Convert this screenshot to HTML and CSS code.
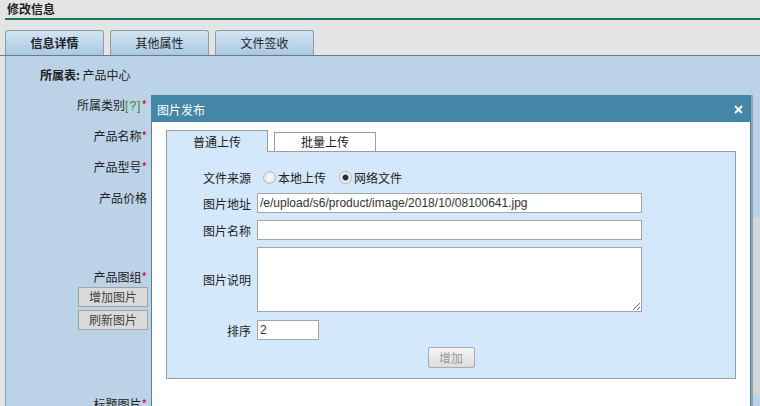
FILE: index.html
```html
<!DOCTYPE html>
<html lang="zh-CN">
<head>
    <meta charset="UTF-8">
    <title>修改信息</title>
    <link rel="stylesheet" href="styles.css">
</head>
<body>
    <div class="page-title">修改信息</div>

    <ul class="tabs">
        <li class="tab active">信息详情</li>
        <li class="tab">其他属性</li>
        <li class="tab">文件签收</li>
    </ul>

    <div class="panel">
        <div class="owner"><b>所属表:</b> 产品中心</div>
        <div class="form-list">
            <div class="form-row">
                <div class="row-label">所属类别<span class="help">[?]</span><em>*</em></div>
                <div class="row-value"></div>
            </div>
            <div class="form-row">
                <div class="row-label">产品名称<em>*</em></div>
                <div class="row-value"></div>
            </div>
            <div class="form-row">
                <div class="row-label">产品型号<em>*</em></div>
                <div class="row-value"></div>
            </div>
            <div class="form-row">
                <div class="row-label">产品价格</div>
                <div class="row-value"></div>
            </div>
            <div class="form-row gallery-row">
                <div class="row-label">
                    <div class="label-text">产品图组<em>*</em></div>
                    <button class="side-btn">增加图片</button>
                    <button class="side-btn">刷新图片</button>
                </div>
                <div class="gallery-box"></div>
            </div>
            <div class="form-row title-row">
                <div class="row-label">标题图片<em>*</em></div>
                <div class="row-value"></div>
            </div>
        </div>
    </div>

    <!-- 图片发布 dialog -->
    <div class="dialog">
        <div class="dialog-head">
            <span>图片发布</span>
            <svg class="dialog-close" width="9" height="9" viewBox="0 0 9 9">
                <path d="M1 1 L8 8 M8 1 L1 8" stroke="#fff" stroke-width="2" fill="none"/>
            </svg>
        </div>
        <div class="dialog-body">
            <div class="inner-tabs">
                <div class="inner-tab current">普通上传</div>
                <div class="inner-tab">批量上传</div>
            </div>
            <div class="upload-box">
                <div class="up-row">
                    <div class="up-label">文件来源</div>
                    <input type="radio" name="src" class="radio" id="src-local">
                    <label for="src-local">本地上传</label>
                    <input type="radio" name="src" class="radio second" id="src-net" checked>
                    <label for="src-net">网络文件</label>
                </div>
                <div class="up-row">
                    <div class="up-label">图片地址</div>
                    <input type="text" class="text-input" value="/e/upload/s6/product/image/2018/10/08100641.jpg">
                </div>
                <div class="up-row">
                    <div class="up-label">图片名称</div>
                    <input type="text" class="text-input">
                </div>
                <div class="up-row">
                    <div class="up-label">图片说明</div>
                    <textarea class="text-area"></textarea>
                </div>
                <div class="up-row">
                    <div class="up-label">排序</div>
                    <input type="text" class="text-input short" value="2">
                </div>
                <div class="up-actions">
                    <button class="add-btn" disabled>增加</button>
                </div>
            </div>
        </div>
    </div>
</body>
</html>
```

FILE: styles.css
```css
body {
    margin: 0;
    background: #e4e4e4;
    font: 12px "Noto Sans CJK SC", "Liberation Sans", sans-serif;
    color: #222;
}

/* Page header */
.page-title {
    margin-left: 5px;
    padding-left: 2px;
    height: 18px;
    line-height: 18px;
    font-weight: bold;
    border-bottom: 2px solid #157a5b;
}

.tabs {
    display: flex;
    gap: 6px;
    margin: 10px 0 0;
    padding: 0 0 0 5px;
    list-style: none;
    border-bottom: 1px solid #777;
}

.tab {
    width: 97px;
    height: 24px;
    line-height: 24px;
    text-align: center;
    border: 1px solid #8b9cab;
    border-bottom: none;
    border-radius: 3px 3px 0 0;
    background: linear-gradient(#d2e4f3, #a8c9e3);
}

.tab.active {
    font-weight: bold;
}

/* Main panel (behind the dialog) */
.panel {
    margin-left: 5px;
    height: 360px;
    padding-top: 9px;
    background: #bcd3e7;
    border-left: 1px solid #8fa3b3;
}

.owner {
    padding-left: 34px;
    line-height: 20px;
}

.form-list {
    margin-top: 4px;
}

.form-row {
    display: flex;
    height: 31px;
    line-height: 31px;
}

.row-label {
    width: 141px;
    padding-right: 1px;
    text-align: right;
}

.row-label em {
    font-style: normal;
    color: #d00;
}

.help {
    font-family: "Liberation Sans", sans-serif;
    color: #2c8a2c;
    letter-spacing: 1px;
}

.row-value {
    flex: 1;
}

.gallery-row {
    height: 177px;
    margin-top: 5px;
    line-height: 18px;
}

.gallery-row .row-label {
    padding-top: 50px;
}

.gallery-box {
    flex: 1;
    margin-left: 4px;
    background: #d5d5d5;
}

.side-btn {
    display: block;
    width: 70px;
    height: 20px;
    margin: 1px -1px 3px auto;
    padding: 0;
    font: inherit;
    line-height: 18px;
    color: #444;
    background: #dadada;
    border: 1px solid #a3a3a3;
}

.title-row {
    line-height: 18px;
}

/* Dialog */
.dialog {
    position: absolute;
    left: 151px;
    top: 95px;
    width: 598px;
    height: 340px;
    background: #fff;
    border: 1px solid #4486a7;
    box-shadow: 2px 0 0 #8ea4b5;
}

.dialog-head {
    display: flex;
    align-items: center;
    justify-content: space-between;
    height: 26px;
    padding: 0 7px 0 5px;
    background: #4486a7;
    color: #fff;
}

.dialog-body {
    padding: 8px 14px 0;
}

.inner-tabs {
    display: flex;
    align-items: flex-end;
    gap: 6px;
}

.inner-tab {
    width: 100px;
    height: 18px;
    line-height: 18px;
    text-align: center;
    border: 1px solid #9c9c9c;
    border-bottom: none;
    background: #fff;
}

.inner-tab.current {
    position: relative;
    height: 21px;
    line-height: 21px;
    margin-bottom: -1px;
    background: #d3e8fb;
}

.upload-box {
    padding: 15px 0 10px;
    background: #d3e8fb;
    border: 1px solid #9c9c9c;
}

.up-row {
    display: flex;
    align-items: center;
    margin-bottom: 7px;
}

.up-row:first-child {
    height: 20px;
    margin-bottom: 6px;
}

.up-row:nth-child(4) {
    margin-bottom: 8px;
}

.up-label {
    width: 84px;
    margin-right: 6px;
    text-align: right;
}

.radio {
    appearance: none;
    width: 13px;
    height: 13px;
    margin: 0 2px 0 6px;
    border: 1px solid #b3b8bd;
    border-radius: 50%;
    background: radial-gradient(#fbfbfb, #dedede);
}

.radio.second {
    margin-left: 13px;
}

.radio:checked {
    background: radial-gradient(#2e2e2e 0 2.5px, #f2f2f2 3.5px, #dcdcdc);
}

.text-input {
    box-sizing: border-box;
    width: 385px;
    height: 20px;
    padding: 0 2px;
    font: 12px "Liberation Sans", sans-serif;
    color: #333;
    border: 1px solid #a5a5a5;
    outline: none;
}

.text-input.short {
    width: 62px;
}

.text-area {
    box-sizing: border-box;
    width: 385px;
    height: 65px;
    margin: 0;
    border: 1px solid #a5a5a5;
    outline: none;
}

.up-actions {
    text-align: center;
}

.add-btn {
    width: 47px;
    height: 21px;
    padding: 0;
    font: inherit;
    color: #999;
    background: linear-gradient(#f6f6f6, #dcdcdc);
    border: 1px solid #aaa;
    border-radius: 2px;
}
```
